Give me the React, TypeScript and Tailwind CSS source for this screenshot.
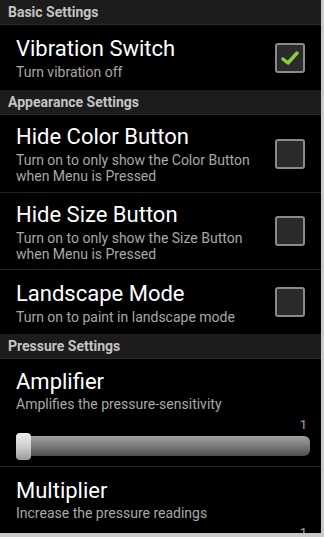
import React from "react";

const font = { fontFamily: "Roboto, 'Noto Sans', sans-serif" };

function Header({ text }: { text: string }) {
  return (
    <div className="h-[25px] shrink-0 bg-[#1c1c1c] flex items-center pl-[8px] pt-[1px] text-[14px] font-bold text-[#c4c4c4] border-b border-[#2a2a2a]">
      {text}
    </div>
  );
}

function Checkbox({ checked }: { checked?: boolean }) {
  return (
    <div className="w-[30px] h-[30px] rounded-[3px] border-2 border-[#8a8a8a] bg-[#2b2b2b] flex items-center justify-center shrink-0">
      {checked && (
        <svg width="18" height="16" viewBox="0 0 18 16">
          <path d="M2 9 L7 13 L16 3" fill="none" stroke="#8ccf3a" strokeWidth="3.4" strokeLinecap="round" strokeLinejoin="round" />
        </svg>
      )}
    </div>
  );
}

function Row({
  title,
  sub,
  checked,
  h,
  sep,
}: {
  title: string;
  sub: string[];
  checked?: boolean;
  h: string;
  sep?: boolean;
}) {
  return (
    <div className={`${h} shrink-0 flex items-center pl-[16px] pr-[16px] ${sep ? "border-b border-[#252525]" : ""}`}>
      <div className="flex-1 flex flex-col">
        <div className="text-[22px] leading-[27px] text-white">{title}</div>
        <div className="text-[14px] leading-[16px] text-[#a8a8a8] mt-[2px]">
          {sub.map((s) => (
            <div key={s}>{s}</div>
          ))}
        </div>
      </div>
      <Checkbox checked={checked} />
    </div>
  );
}

export default function App() {
  return (
    <div className="w-[324px] h-[537px] bg-[#c9c9c9] overflow-hidden" style={font}>
      <div className="w-[321px] h-[533px] bg-black overflow-hidden flex flex-col">
        <Header text="Basic Settings" />
        <Row h="h-[65px]" title="Vibration Switch" sub={["Turn vibration off"]} checked />
        <Header text="Appearance Settings" />
        <Row
          h="h-[78px]"
          sep
          title="Hide Color Button"
          sub={["Turn on to only show the Color Button", "when Menu is Pressed"]}
        />
        <Row
          h="h-[77px]"
          sep
          title="Hide Size Button"
          sub={["Turn on to only show the Size Button", "when Menu is Pressed"]}
        />
        <Row h="h-[64px]" title="Landscape Mode" sub={["Turn on to paint in landscape mode"]} />
        <Header text="Pressure Settings" />
        <div className="h-[108px] shrink-0 border-b border-[#252525] flex flex-col pl-[16px] pr-[11px] pt-[9px]">
          <div className="text-[22px] leading-[27px] text-white">Amplifier</div>
          <div className="text-[14px] leading-[16px] text-[#a8a8a8] mt-[1px]">
            Amplifies the pressure-sensitivity
          </div>
          <div className="text-[13px] leading-[14px] text-[#a8a8a8] text-right pr-[3px] mt-[6px]">1</div>
          <div className="relative mt-[3px] h-[22px]">
            <div className="absolute left-0 right-0 top-[1px] h-[20px] rounded-[6px] bg-gradient-to-b from-[#a2a2a2] via-[#7a7a7a] to-[#4e4e4e]" />
            <div className="absolute left-0 top-[-2px] w-[15px] h-[27px] rounded-[4px] bg-gradient-to-b from-[#ececec] via-[#cfcfcf] to-[#9a9a9a]" />
          </div>
        </div>
        <div className="shrink-0 flex flex-col pl-[16px] pr-[11px] pt-[10px]">
          <div className="text-[22px] leading-[27px] text-white">Multiplier</div>
          <div className="text-[14px] leading-[16px] text-[#a8a8a8] mt-[1px]">
            Increase the pressure readings
          </div>
          <div className="text-[13px] leading-[14px] text-[#a8a8a8] text-right pr-[3px] mt-[5px]">1</div>
        </div>
      </div>
    </div>
  );
}
